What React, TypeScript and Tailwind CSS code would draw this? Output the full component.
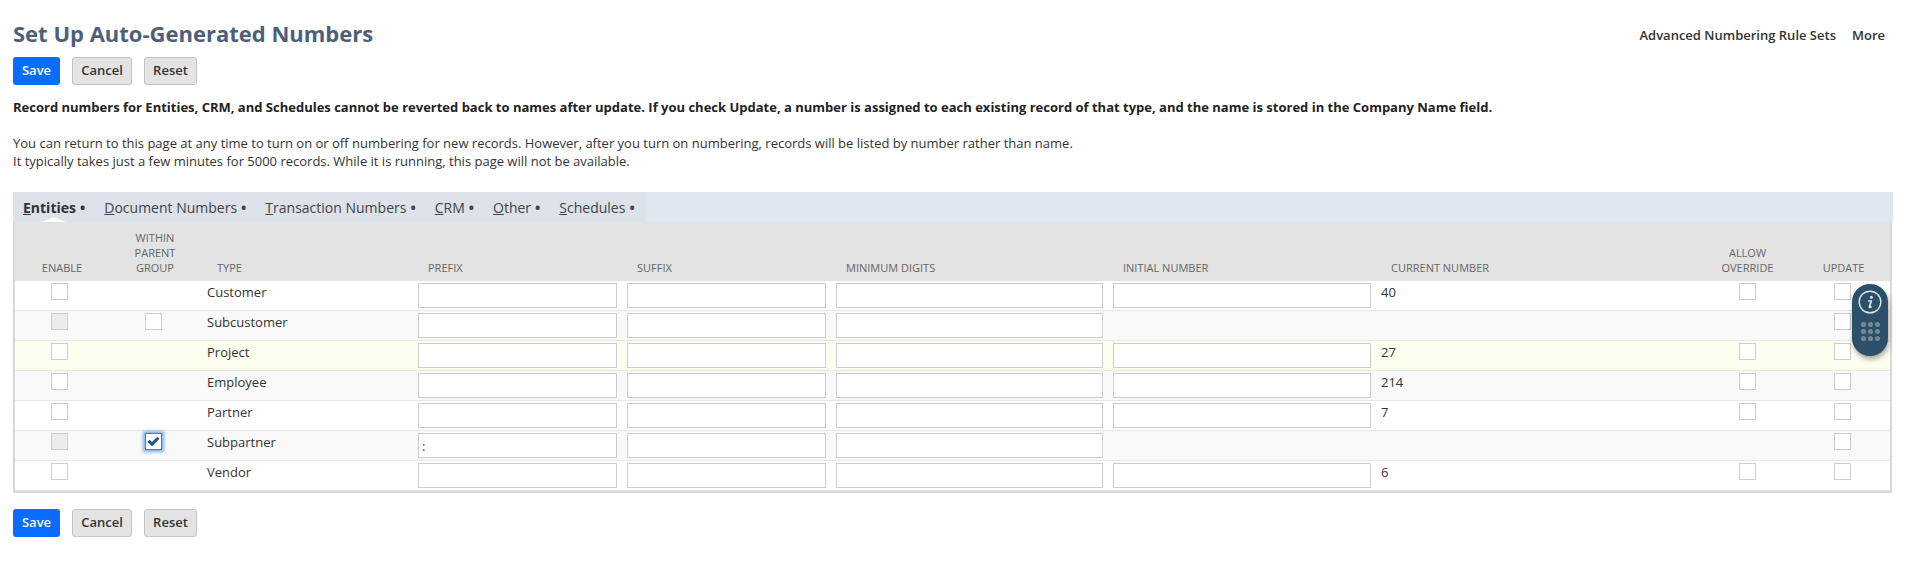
const font = 'font-["Open_Sans",sans-serif]'
const gridCols = 'grid grid-cols-[89px_98px_216px_209px_209px_277px_268px_319px_95px_95px]'

type Row = {
  name: string
  enabled?: boolean
  within?: boolean
  checked?: boolean
  prefix?: string
  initial?: boolean
  current?: string
  override?: boolean
  bg: string
}

const rows: Row[] = [
  { name: 'Customer', enabled: true, initial: true, current: '40', override: true, bg: 'bg-white' },
  { name: 'Subcustomer', within: true, bg: 'bg-[#f9f9f9]' },
  { name: 'Project', enabled: true, initial: true, current: '27', override: true, bg: 'bg-[#fdfeee]' },
  { name: 'Employee', enabled: true, initial: true, current: '214', override: true, bg: 'bg-[#f9f9f9]' },
  { name: 'Partner', enabled: true, initial: true, current: '7', override: true, bg: 'bg-white' },
  { name: 'Subpartner', within: true, checked: true, prefix: ':', bg: 'bg-[#f9f9f9]' },
  { name: 'Vendor', enabled: true, initial: true, current: '6', override: true, bg: 'bg-white' },
]

const tabs = [
  { label: 'Entities', key: 'E', active: true },
  { label: 'Document Numbers', key: 'D' },
  { label: 'Transaction Numbers', key: 'T' },
  { label: 'CRM', key: 'C' },
  { label: 'Other', key: 'O' },
  { label: 'Schedules', key: 'S' },
]

function Buttons() {
  return (
    <div className="flex gap-3">
      <button className="h-7 w-[47px] rounded-[3px] bg-[#0a6cff] text-[13px] font-semibold text-white">Save</button>
      <button className="h-7 w-[60px] rounded-[3px] border border-[#c4c4c4] bg-[#e3e3e3] text-[13px] font-semibold text-[#333]">Cancel</button>
      <button className="h-7 w-[53px] rounded-[3px] border border-[#c4c4c4] bg-[#e3e3e3] text-[13px] font-semibold text-[#333]">Reset</button>
    </div>
  )
}

function Check({ disabled, checked }: { disabled?: boolean; checked?: boolean }) {
  if (checked) {
    return (
      <span className="flex h-[17px] w-[17px] items-center justify-center border border-[#3f7fc4] bg-white shadow-[0_0_3px_2px_#7fb2e6]">
        <svg width="13" height="11" viewBox="0 0 13 11">
          <path d="M0.5 5.8L2.6 3.7L5 6.1L10.4 0.7L12.5 2.8L5 10.3Z" fill="#24518f" />
        </svg>
      </span>
    )
  }
  return <span className={`block h-[17px] w-[17px] border border-[#ccc] ${disabled ? 'bg-[#ececec]' : 'bg-white'}`} />
}

function TextBox({ value, className }: { value?: string; className: string }) {
  return (
    <div className={`mt-[1px] flex h-[25px] items-end border border-[#ccc] bg-white pb-[3px] pl-[3px] text-[13px] leading-4 text-[#5c2a2a] ${className}`}>
      {value}
    </div>
  )
}

function PillWidget() {
  return (
    <div className="absolute left-[1852px] top-[284px] flex h-[72px] w-9 flex-col items-center rounded-[18px] bg-[#2c5069] pt-[6px] shadow-[1px_3px_5px_rgba(0,0,0,0.35)]">
      <svg width="24" height="24" viewBox="0 0 24 24">
        <circle cx="12" cy="12" r="10.8" fill="none" stroke="#dbe3e8" strokeWidth="1.4" />
        <circle cx="13.4" cy="7.2" r="1.5" fill="#dbe3e8" />
        <path d="M10 11h3.2l-1.7 5.8c-.2.8.6 1 2-.5" fill="none" stroke="#dbe3e8" strokeWidth="1.7" />
      </svg>
      <div className="mt-[8px] grid grid-cols-3 gap-x-[2px] gap-y-[2px]">
        {Array.from({ length: 9 }).map((_, i) => (
          <span key={i} className="h-[5px] w-[5px] rounded-full bg-[#73899a]" />
        ))}
      </div>
    </div>
  )
}

export default function App() {
  return (
    <div className={`relative h-[561px] w-[1905px] overflow-hidden bg-white pl-[13px] pr-3 text-[13px] text-[#333] ${font}`}>
      {/* Page title */}
      <div className="flex h-[57px] items-start justify-between pt-[16px]">
        <h1 className="text-[22px] font-bold leading-[34px] text-[#4d5f79]">Set Up Auto-Generated Numbers</h1>
        <div className="mt-[7px] flex gap-4 pr-[8px] text-[13px] font-semibold leading-6 text-[#333]">
          <span>Advanced Numbering Rule Sets</span>
          <span>More</span>
        </div>
      </div>
      <Buttons />

      <p className="mt-[13px] font-bold leading-[18px] text-[#222]">
        Record numbers for Entities, CRM, and Schedules cannot be reverted back to names after update. If you check Update, a number is assigned to each existing record of that type, and the name is stored in the Company Name field.
      </p>
      <p className="mt-[18px] leading-[18px]">
        You can return to this page at any time to turn on or off numbering for new records. However, after you turn on numbering, records will be listed by number rather than name.
        <br />
        It typically takes just a few minutes for 5000 records. While it is running, this page will not be available.
      </p>

      {/* Tab strip */}
      <div className="relative mt-[22px] h-[30px] w-[1880px] bg-[#dfe6f0] text-[14px] text-[#444]">
        <div className="flex h-full w-[632px] bg-[#dce1ea] pl-[10px] pt-[5px]">
          {tabs.map((t) => (
            <span key={t.label} className={`mr-[19px] whitespace-nowrap leading-[22px] ${t.active ? 'font-bold text-[#333]' : ''}`}>
              <span className="underline">{t.key}</span>
              {t.label.slice(1)}
              <span className="ml-[4px] font-bold">•</span>
            </span>
          ))}
        </div>
        <span className="absolute bottom-0 left-[29px] h-0 w-0 border-x-[12px] border-b-[5px] border-x-transparent border-b-white" />
      </div>

      {/* Numbering table */}
      <div className="w-[1879px] border-2 border-t-0 border-[#d8d8d8] bg-white">
        <div className={`${gridCols} h-[59px] items-end bg-[#e3e3e3] pb-[6px] text-[11px] leading-[15px] text-[#666]`}>
          <span className="pl-[5px] text-center">ENABLE</span>
          <span className="pl-[4px] text-center">WITHIN<br />PARENT<br />GROUP</span>
          <span className="pl-[15px]">TYPE</span>
          <span className="pl-[10px]">PREFIX</span>
          <span className="pl-[10px]">SUFFIX</span>
          <span className="pl-[10px]">MINIMUM DIGITS</span>
          <span className="pl-[10px]">INITIAL NUMBER</span>
          <span className="pl-[10px]">CURRENT NUMBER</span>
          <span className="text-center">ALLOW<br />OVERRIDE</span>
          <span className="pl-[2px] text-center">UPDATE</span>
        </div>
        {rows.map((r) => (
          <div key={r.name} className={`${gridCols} h-[30px] border-b border-[#e6e6e6] pt-[1px] ${r.bg}`}>
            <div className="flex justify-center pt-[1px]"><Check disabled={!r.enabled} /></div>
            <div className="flex justify-center pt-[1px]">{r.within && <Check checked={r.checked} />}</div>
            <div className="pl-[5px] leading-[20px]">{r.name}</div>
            <TextBox value={r.prefix} className="w-[199px]" />
            <TextBox className="w-[199px]" />
            <TextBox className="w-[267px]" />
            {r.initial ? <TextBox className="w-[258px]" /> : <div />}
            <div className="leading-[20px]">{r.current}</div>
            <div className="flex justify-center pt-[1px]">{r.override && <Check />}</div>
            <div className="flex justify-center pt-[1px]"><Check /></div>
          </div>
        ))}
      </div>

      <div className="mt-[16px]">
        <Buttons />
      </div>
      <PillWidget />
    </div>
  )
}
